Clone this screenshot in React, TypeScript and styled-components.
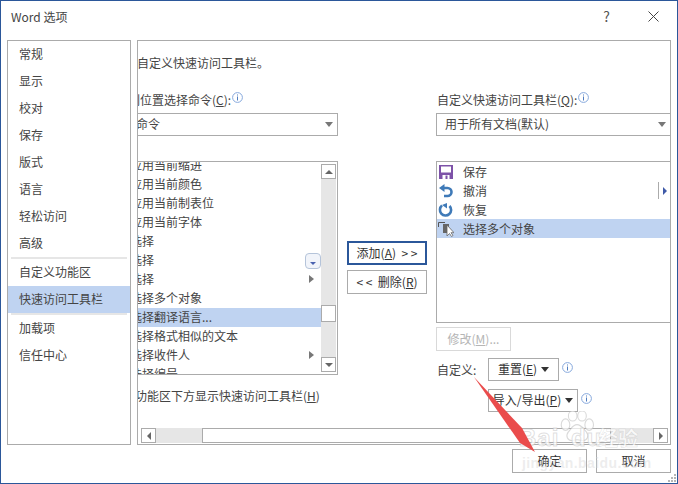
import React from 'react';
import styled, { createGlobalStyle } from 'styled-components';

const GlobalStyle = createGlobalStyle`
  html, body {
    margin: 0;
    padding: 0;
    background: #fff;
  }
  * { box-sizing: border-box; }
`;

const Window = styled.div`
  position: relative;
  width: 678px;
  height: 484px;
  display: flex;
  flex-direction: column;
  overflow: hidden;
  background: #fff;
  border: 1px solid #2b579a;
  color: #444;
  font-family: "Noto Sans CJK SC", "Noto Sans", sans-serif;
  font-size: 12px;
  line-height: 19px;
`;

const TitleBar = styled.div`
  height: 39px;
  padding: 0 0 9px 10px;
  display: flex;
  align-items: center;
`;

const WindowTitle = styled.div`
  flex: 1;
  font-size: 12px;
`;

const TitleButton = styled.div`
  width: 47px;
  height: 30px;
  display: flex;
  align-items: center;
  justify-content: center;
  font-size: 14px;
  color: #555;
`;

const Body = styled.div`
  height: 405px;
  padding: 0 6px 0 6px;
  display: flex;
  gap: 6px;
`;

const Sidebar = styled.div`
  width: 124px;
  flex: none;
  border: 1px solid #ababab;
`;

const SideItem = styled.div<{ selected?: boolean }>`
  height: 27px;
  padding: 0 0 2px 11px;
  display: flex;
  align-items: center;
  background: ${props => (props.selected ? '#bfd3f1' : 'transparent')};
`;

const SideDivider = styled.div`
  height: 2px;
  margin: 0 3px;
  background: #e6e6e6;
`;

const Panel = styled.div`
  flex: 1;
  min-width: 0;
  display: flex;
  flex-direction: column;
  overflow: hidden;
  border: 1px solid #ababab;
`;

const PanelTitle = styled.div`
  height: 20px;
  margin: 12px 0 0 -1px;
  line-height: 20px;
  white-space: nowrap;
`;

const Columns = styled.div`
  margin: 17px -1px 0 -35px;
  display: grid;
  grid-template-columns: 235px 80px 235px;
  column-gap: 9px;
  flex: none;
`;

const Column = styled.div`
  display: flex;
  flex-direction: column;
  min-width: 0;
`;

const FieldLabel = styled.div`
  height: 20px;
  padding: 0 0 2px 1px;
  display: flex;
  align-items: center;
  white-space: nowrap;
`;

const Key = styled.span`
  text-decoration: underline;
  text-underline-offset: 1px;
`;

const Info = styled.svg`
  width: 11px;
  height: 11px;
  margin: -4px 0 0 1px;
  flex: none;
`;

const SelectBox = styled.div`
  height: 23px;
  margin-top: 3px;
  padding: 0 4px 2px 8px;
  display: flex;
  align-items: center;
  justify-content: space-between;
  border: 1px solid #ababab;
  background: #fff;
`;

const Caret = styled.span<{ dark?: boolean }>`
  width: 0;
  height: 0;
  flex: none;
  margin-top: 2px;
  border-left: 4px solid transparent;
  border-right: 4px solid transparent;
  border-top: 5px solid ${props => (props.dark ? '#333' : '#777')};
`;

const ListBox = styled.div<{ height: number }>`
  height: ${props => props.height}px;
  margin-top: 25px;
  display: flex;
  border: 1px solid #ababab;
  overflow: hidden;
`;

const ListViewport = styled.div`
  flex: 1;
  min-width: 0;
  overflow: hidden;
`;

const ScrolledRows = styled.div`
  margin-top: -6px;
`;

const LeftRow = styled.div<{ selected?: boolean }>`
  height: 19px;
  padding: 0 5px 2px 26px;
  display: flex;
  align-items: center;
  justify-content: space-between;
  white-space: nowrap;
  background: ${props => (props.selected ? '#bfd3f1' : 'transparent')};
`;

const RowTriangle = styled.span`
  width: 0;
  height: 0;
  margin: 1px 2px 0 0;
  border-top: 4px solid transparent;
  border-bottom: 4px solid transparent;
  border-left: 5px solid #777;
`;

const GalleryButton = styled.span`
  width: 16px;
  height: 16px;
  margin: 2px -5px 0 0;
  display: flex;
  align-items: flex-end;
  justify-content: center;
  padding-bottom: 3px;
  border: 1px solid #b5c4da;
  border-radius: 4px;
  background: #f1f4fa;
`;

const GalleryArrow = styled.span`
  width: 0;
  height: 0;
  border-left: 3px solid transparent;
  border-right: 3px solid transparent;
  border-top: 3px solid #4a62b0;
`;

const VScroll = styled.div`
  width: 16px;
  flex: none;
  padding: 2px 1px 2px 0;
  display: flex;
  flex-direction: column;
`;

const ScrollBtn = styled.div`
  width: 15px;
  height: 15px;
  flex: none;
  display: flex;
  align-items: center;
  justify-content: center;
  background: #fff;
  border: 1px solid #ababab;
`;

const Track = styled.div<{ size?: number }>`
  flex: ${props => (props.size ? `0 0 ${props.size}px` : '1')};
  background: #e6e6e6;
`;

const VThumb = styled.div`
  height: 17px;
  flex: none;
  background: #fff;
  border: 1px solid #ababab;
`;

const ArrowUp = styled.span`
  border-left: 4px solid transparent;
  border-right: 4px solid transparent;
  border-bottom: 4px solid #666;
`;

const ArrowDown = styled.span`
  border-left: 4px solid transparent;
  border-right: 4px solid transparent;
  border-top: 4px solid #666;
`;

const ArrowLeft = styled.span`
  border-top: 4px solid transparent;
  border-bottom: 4px solid transparent;
  border-right: 4px solid #666;
`;

const ArrowRight = styled.span`
  border-top: 4px solid transparent;
  border-bottom: 4px solid transparent;
  border-left: 4px solid #666;
`;

const BelowListLabel = styled.div`
  height: 20px;
  margin-top: 11px;
  padding: 0 0 2px 20px;
  display: flex;
  align-items: center;
  white-space: nowrap;
`;

const MiddleColumn = styled(Column)`
  padding-top: 151px;
  gap: 5px;
`;

const DialogButton = styled.div<{ primary?: boolean; disabled?: boolean }>`
  height: 24px;
  padding-bottom: 2px;
  display: flex;
  align-items: center;
  justify-content: center;
  white-space: pre;
  background: #fff;
  color: ${props => (props.disabled ? '#b5b5b5' : '#333')};
  border: ${props =>
    props.primary ? '2px solid #2b579a' : props.disabled ? '1px solid #d9d9d9' : '1px solid #ababab'};
`;

const RightRow = styled.div<{ selected?: boolean }>`
  position: relative;
  height: 19px;
  padding-left: 1px;
  display: flex;
  align-items: center;
  background: ${props => (props.selected ? '#bfd3f1' : 'transparent')};
`;

const RowIcon = styled.svg`
  width: 16px;
  height: 16px;
  flex: none;
  margin-right: 9px;
`;

const SubmenuMark = styled.div`
  position: absolute;
  right: 3px;
  top: 1px;
  height: 17px;
  padding-left: 4px;
  display: flex;
  align-items: center;
  border-left: 1px solid #ababab;
`;

const SubmenuArrow = styled.span`
  border-top: 4px solid transparent;
  border-bottom: 4px solid transparent;
  border-left: 4px solid #3f5aa8;
`;

const ModifyButton = styled(DialogButton)`
  width: 75px;
  margin-top: 4px;
`;

const CustomGrid = styled.div`
  margin-top: 7px;
  display: grid;
  grid-template-columns: 52px auto;
  row-gap: 8px;
  justify-content: start;
`;

const CustomLabel = styled.div`
  padding-left: 1px;
  display: flex;
  align-items: center;
`;

const ButtonRow = styled.div`
  grid-column: 2;
  display: flex;
  align-items: center;
  gap: 3px;
`;

const MenuButton = styled.div<{ width: number }>`
  width: ${props => props.width}px;
  height: 23px;
  padding-bottom: 2px;
  display: flex;
  align-items: center;
  justify-content: center;
  gap: 4px;
  color: #333;
  white-space: nowrap;
  border: 1px solid #ababab;
  background: #fff;
`;

const ButtonInfo = styled(Info)`
  margin: -5px 0 0 0;
`;

const HScroll = styled.div`
  height: 15px;
  margin: auto 2px 1px 3px;
  display: flex;
  align-items: stretch;
`;

const HThumb = styled.div`
  width: 409px;
  flex: none;
  background: #fff;
  border: 1px solid #ababab;
`;

const Footer = styled.div`
  padding: 4px 6px 0 0;
  display: flex;
  justify-content: flex-end;
  gap: 9px;
`;

const FooterButton = styled(DialogButton)`
  width: 75px;
  color: #333;
`;

const Grip = styled.svg`
  position: absolute;
  right: 0;
  bottom: 0;
  width: 10px;
  height: 10px;
`;

const ArrowOverlay = styled.svg`
  position: absolute;
  left: -1px;
  top: -1px;
  width: 678px;
  height: 484px;
  pointer-events: none;
`;

const Watermark = styled.div`
  position: absolute;
  left: 518px;
  top: 410px;
  width: 150px;
  height: 64px;
  pointer-events: none;
`;

const Paw = styled.svg`
  position: absolute;
  left: 40px;
  top: 0;
  width: 36px;
  height: 33px;
`;

const WatermarkBrand = styled.div`
  position: absolute;
  left: 0;
  top: 14px;
  font-family: "Liberation Sans", sans-serif;
  font-size: 24px;
  line-height: 26px;
  font-weight: 700;
  letter-spacing: 1px;
  word-spacing: 4px;
  color: rgba(255, 255, 255, 0.75);
  -webkit-text-stroke: 1px rgba(185, 185, 185, 0.45);
  white-space: nowrap;
`;

const WatermarkCn = styled.div`
  position: absolute;
  left: 79px;
  top: 15px;
  font-size: 20px;
  line-height: 24px;
  font-weight: 700;
  color: rgba(255, 255, 255, 0.75);
  -webkit-text-stroke: 0.5px rgba(185, 185, 185, 0.45);
  white-space: nowrap;
`;

const WatermarkUrl = styled.div`
  position: absolute;
  left: 3px;
  top: 44px;
  font-family: "Liberation Sans", sans-serif;
  font-size: 14px;
  line-height: 16px;
  font-weight: 700;
  letter-spacing: 0.4px;
  color: rgba(215, 215, 215, 0.45);
  white-space: nowrap;
`;

const InfoIcon = ({ as: Comp = Info }: { as?: typeof Info }) => (
  <Comp viewBox="0 0 11 11">
    <circle cx="5.5" cy="5.5" r="4.9" fill="#fff" stroke="#86a8dc" />
    <rect x="5" y="2.5" width="1" height="1" fill="#4f7cc0" />
    <rect x="5" y="4.5" width="1" height="4" fill="#4f7cc0" />
  </Comp>
);

const leftRows = [
  '应用当前缩进',
  '应用当前颜色',
  '应用当前制表位',
  '应用当前字体',
  '选择',
  '选择',
  '选择',
  '选择多个对象',
  '选择翻译语言...',
  '选择格式相似的文本',
  '选择收件人',
  '选择编号',
];

const App: React.FC = () => {
  return (
    <Window>
      <GlobalStyle />
      <TitleBar>
        <WindowTitle>Word 选项</WindowTitle>
        <TitleButton>?</TitleButton>
        <TitleButton>
          <svg width="11" height="11" viewBox="0 0 11 11">
            <path d="M0.5 0.5L10.5 10.5M10.5 0.5L0.5 10.5" stroke="#444" strokeWidth="1" fill="none" />
          </svg>
        </TitleButton>
      </TitleBar>

      <Body>
        <Sidebar>
          <SideItem>常规</SideItem>
          <SideItem>显示</SideItem>
          <SideItem>校对</SideItem>
          <SideItem>保存</SideItem>
          <SideItem>版式</SideItem>
          <SideItem>语言</SideItem>
          <SideItem>轻松访问</SideItem>
          <SideItem>高级</SideItem>
          <SideDivider />
          <SideItem>自定义功能区</SideItem>
          <SideItem selected>快速访问工具栏</SideItem>
          <SideDivider />
          <SideItem>加载项</SideItem>
          <SideItem>信任中心</SideItem>
        </Sidebar>

        <Panel>
          <PanelTitle>自定义快速访问工具栏。</PanelTitle>
          <Columns>
            <Column>
              <FieldLabel>
                从下列位置选择命令(<Key>C</Key>):
                <InfoIcon />
              </FieldLabel>
              <SelectBox>
                常用命令
                <Caret />
              </SelectBox>
              <ListBox height={214}>
                <ListViewport>
                  <ScrolledRows>
                    {leftRows.map((text, i) => (
                      <LeftRow key={i} selected={i === 8}>
                        {text}
                        {i === 5 && (
                          <GalleryButton>
                            <GalleryArrow />
                          </GalleryButton>
                        )}
                        {(i === 6 || i === 10) && <RowTriangle />}
                      </LeftRow>
                    ))}
                  </ScrolledRows>
                </ListViewport>
                <VScroll>
                  <ScrollBtn>
                    <ArrowUp />
                  </ScrollBtn>
                  <Track size={126} />
                  <VThumb />
                  <Track />
                  <ScrollBtn>
                    <ArrowDown />
                  </ScrollBtn>
                </VScroll>
              </ListBox>
              <BelowListLabel>
                在功能区下方显示快速访问工具栏(<Key>H</Key>)
              </BelowListLabel>
            </Column>

            <MiddleColumn>
              <DialogButton primary>
                添加(<Key>A</Key>){'  > >'}
              </DialogButton>
              <DialogButton>
                {'< <  '}删除(<Key>R</Key>)
              </DialogButton>
            </MiddleColumn>

            <Column>
              <FieldLabel>
                自定义快速访问工具栏(<Key>Q</Key>):
                <InfoIcon />
              </FieldLabel>
              <SelectBox>
                用于所有文档(默认)
                <Caret />
              </SelectBox>
              <ListBox height={162}>
                <ListViewport>
                  <RightRow>
                    <RowIcon viewBox="0 0 16 16">
                      <path d="M1 1h14v14H1z" fill="#7d52a8" />
                      <rect x="3" y="2.5" width="10" height="6" fill="#fff" />
                      <rect x="4.5" y="11" width="7" height="4" fill="#fff" />
                      <rect x="7.5" y="11.5" width="2" height="3.5" fill="#7d52a8" />
                    </RowIcon>
                    保存
                  </RightRow>
                  <RightRow>
                    <RowIcon viewBox="0 0 16 16">
                      <path d="M6.5 1L1 5l5.5 4z" fill="#3f7ab8" />
                      <path d="M5 5h4.5a4 4 0 0 1 0 8H6" fill="none" stroke="#3f7ab8" strokeWidth="2.6" />
                    </RowIcon>
                    撤消
                    <SubmenuMark>
                      <SubmenuArrow />
                    </SubmenuMark>
                  </RightRow>
                  <RightRow>
                    <RowIcon viewBox="0 0 16 16">
                      <path d="M11.5 4A5.6 5.6 0 1 1 4 3.6" fill="none" stroke="#3f7ab8" strokeWidth="2.6" />
                      <path d="M9 1v5.5L4 3z" fill="#3f7ab8" />
                    </RowIcon>
                    恢复
                  </RightRow>
                  <RightRow selected>
                    <RowIcon viewBox="0 0 16 16">
                      <path d="M0.5 6V1.5H7" fill="none" stroke="#555" strokeWidth="1" />
                      <rect x="5" y="3" width="6" height="9" fill="#666" />
                      <path d="M9 4v11l2.5-2.5 2 3 1.5-1-2-2.8H16z" fill="#fff" stroke="#666" strokeWidth="0.8" />
                    </RowIcon>
                    选择多个对象
                  </RightRow>
                </ListViewport>
              </ListBox>
              <ModifyButton disabled>
                修改(<Key>M</Key>)...
              </ModifyButton>
              <CustomGrid>
                <CustomLabel>自定义:</CustomLabel>
                <ButtonRow>
                  <MenuButton width={71}>
                    <span>
                      重置(<Key>E</Key>)
                    </span>
                    <Caret dark />
                  </MenuButton>
                  <InfoIcon as={ButtonInfo} />
                </ButtonRow>
                <ButtonRow>
                  <MenuButton width={90}>
                    <span>
                      导入/导出(<Key>P</Key>)
                    </span>
                    <Caret dark />
                  </MenuButton>
                  <InfoIcon as={ButtonInfo} />
                </ButtonRow>
              </CustomGrid>
            </Column>
          </Columns>

          <HScroll>
            <ScrollBtn>
              <ArrowLeft />
            </ScrollBtn>
            <Track size={46} />
            <HThumb />
            <Track />
            <ScrollBtn>
              <ArrowRight />
            </ScrollBtn>
          </HScroll>
        </Panel>
      </Body>

      <Footer>
        <FooterButton>确定</FooterButton>
        <FooterButton>取消</FooterButton>
      </Footer>

      <Grip viewBox="0 0 10 10">
        <g fill="#b5b5b5">
          <rect x="7" y="1" width="2" height="2" />
          <rect x="4" y="4" width="2" height="2" />
          <rect x="7" y="4" width="2" height="2" />
          <rect x="1" y="7" width="2" height="2" />
          <rect x="4" y="7" width="2" height="2" />
          <rect x="7" y="7" width="2" height="2" />
        </g>
      </Grip>

      <Watermark>
        <Paw viewBox="0 0 50 46">
          <g fill="rgba(255,255,255,0.7)" stroke="rgba(185,185,185,0.55)" strokeWidth="1.5">
            <ellipse cx="9" cy="19" rx="6" ry="8" />
            <ellipse cx="19" cy="7" rx="6" ry="7" />
            <ellipse cx="32" cy="7" rx="6" ry="7" />
            <ellipse cx="42" cy="19" rx="6" ry="8" />
            <path d="M25 19c-6 0-8 6-12 10-4 5-2 13 6 12 3 0 4-1 6-1s4 1 7 1c8 1 10-7 6-12-4-4-7-10-13-10z" />
          </g>
        </Paw>
        <WatermarkBrand>Bai du</WatermarkBrand>
        <WatermarkCn>经验</WatermarkCn>
        <WatermarkUrl>jingyan.baidu.com</WatermarkUrl>
      </Watermark>

      <ArrowOverlay viewBox="0 0 678 484">
        <path d="M474 377L522 428L535 452L520 443z" fill="#ea4c4c" />
      </ArrowOverlay>
    </Window>
  );
};

export default App;
